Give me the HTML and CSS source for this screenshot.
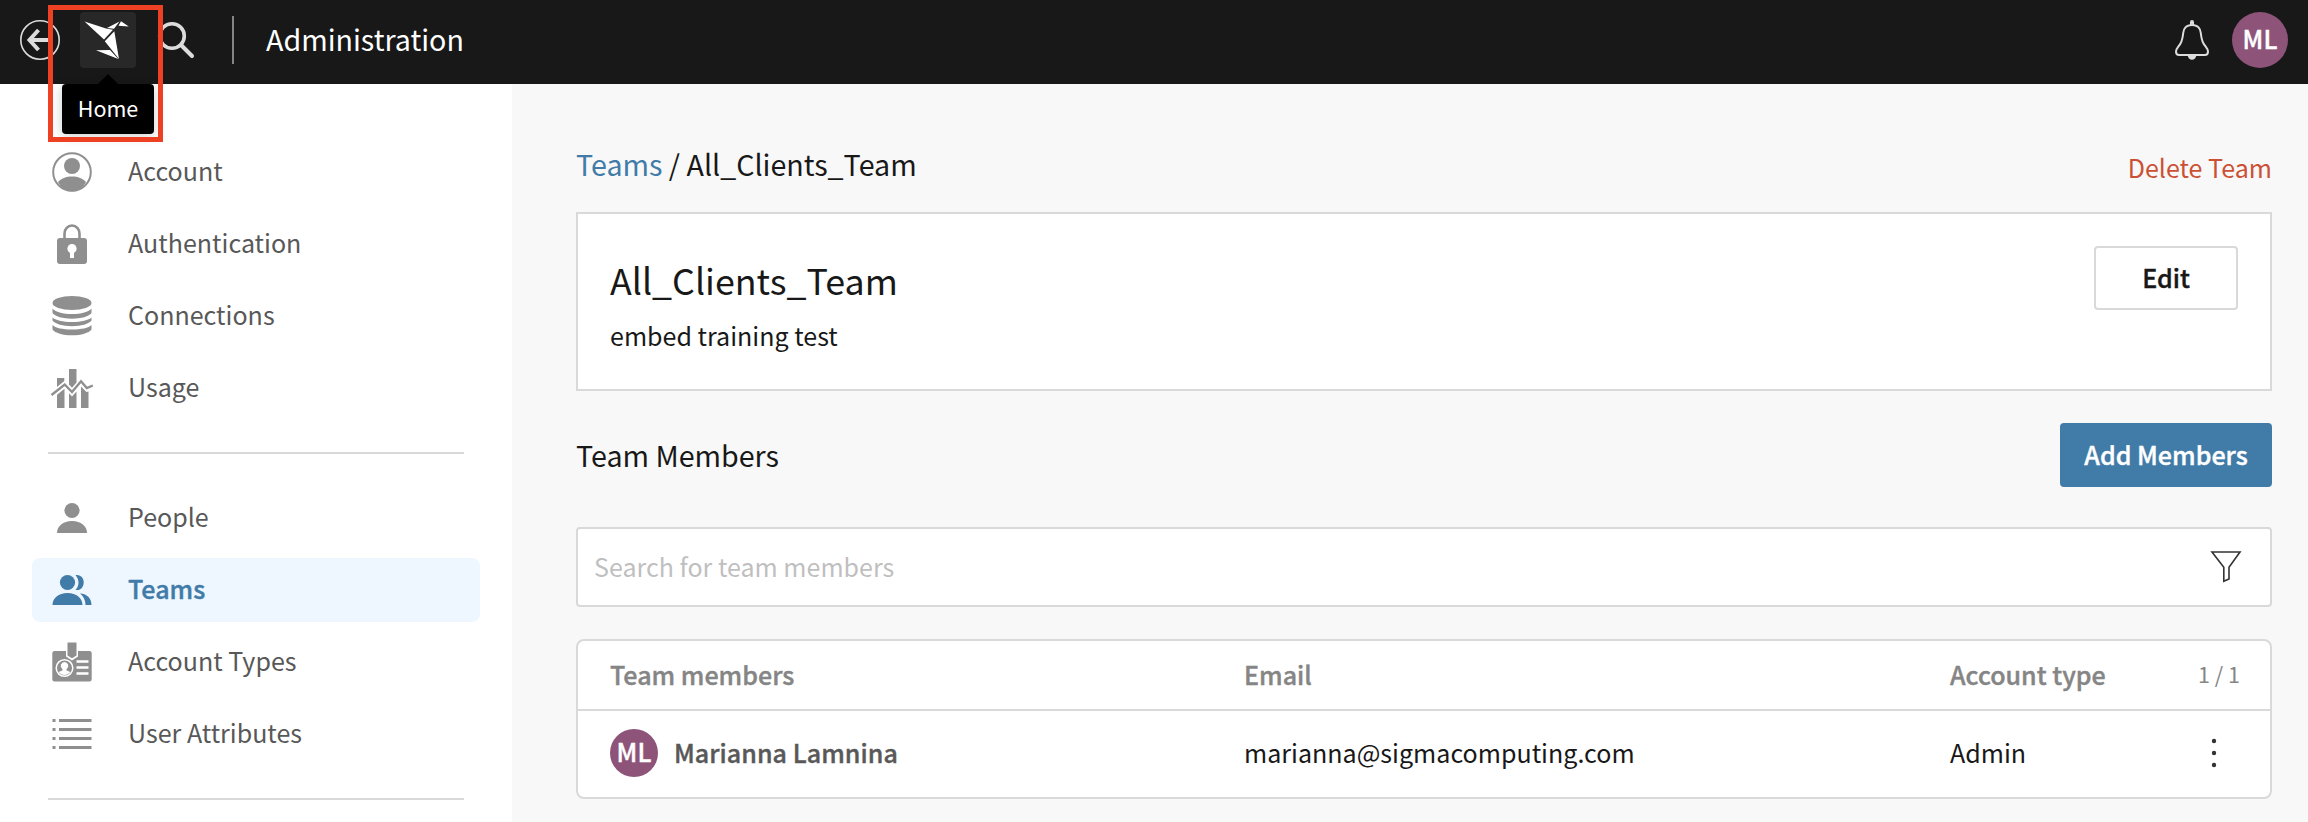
FILE: index.html
```html
<!DOCTYPE html>
<html lang="en">
<head>
<meta charset="utf-8">
<title>Administration</title>
<link rel="stylesheet" href="styles.css">
</head>
<body>
<header class="topbar">
  <svg class="back" viewBox="0 0 40 40"><circle cx="20" cy="20" r="19.2" fill="none" stroke="#dcdcdc" stroke-width="1.6"/><path d="M29 20H10M18.5 10 9.5 20l9 10" fill="none" stroke="#dcdcdc" stroke-width="4"/></svg>
  <div class="home">
    <svg viewBox="0 0 56 56" fill="#fff"><path d="M4.500 9.500 26 16.600 33 17.800 24 27.500ZM27 16 39.500 9.500 34 16.800ZM41 9.300 48.800 14.500 38.500 13.800ZM34.300 19.300 39 47 24.800 29.300ZM16 38.200 30 38 38.300 47Z"/></svg>
    <div class="tooltip">Home</div>
    <div class="marker"></div>
  </div>
  <svg class="search" viewBox="0 0 40 40"><circle cx="16" cy="16" r="12.3" fill="none" stroke="#dcdcdc" stroke-width="3.6"/><path d="m25 25 11 11" stroke="#dcdcdc" stroke-width="4" stroke-linecap="round"/></svg>
  <div class="bar"></div>
  <h1 class="apptitle">Administration</h1>
  <svg class="bell" viewBox="0 0 34 40"><path d="M17 5c-6 0-8.500 4-8.800 8-.5 5-.7 7-2.700 10.500C3.500 27 1 28.500 1 31.500 1 33.500 2.200 35 4.200 35h25.600c2 0 3.200-1.500 3.200-3.500 0-3-2.500-4.500-4.500-8-2-3.500-2.200-5.500-2.700-10.500C25.500 9 23 5 17 5Z" fill="none" stroke="#dcdcdc" stroke-width="2"/><path d="M15 5V2a2 2 0 0 1 4 0v3ZM12.800 35.500h8.400a4.200 4.200 0 0 1-8.400 0Z" fill="#dcdcdc"/></svg>
  <div class="avatar big"><span>ML</span></div>
</header>
<div class="layout">
  <nav class="side">
    <a class="item"><svg viewBox="0 0 40 40"><circle cx="20" cy="20" r="18.800" fill="none" stroke="currentColor" stroke-width="2"/><circle cx="20" cy="14" r="8"/><path d="M6 30c3-3.500 8-5.500 14-5.500S31 26.500 34 30C31 36 26 39.300 20 39.300S9 36 6 30Z"/></svg><span>Account</span></a>
    <a class="item"><svg viewBox="0 0 40 40"><path d="M12.500 15V9.500a7.500 8 0 0 1 15 0V15" fill="none" stroke="currentColor" stroke-width="2.600"/><path fill-rule="evenodd" d="M8 14h24a3 3 0 0 1 3 3v20a3 3 0 0 1-3 3H8a3 3 0 0 1-3-3V17a3 3 0 0 1 3-3ZM20 20a4.700 4.700 0 0 0-2 8.900V34h4v-5.100A4.700 4.700 0 0 0 20 20Z"/></svg><span>Authentication</span></a>
    <a class="item"><svg viewBox="0 0 40 40"><ellipse cx="20" cy="7" rx="19.500" ry="7"/><path d="M.5 12.500C3 16 11 18 20 18s17-2 19.500-5.500V17C37 20.500 29 22.700 20 22.700S3 20.500.5 17ZM.5 21.500C3 24 11 26 20 26s17-2 19.500-4.500V24.500C37 28 29 30.200 20 30.200S3 28 .5 24.500ZM.5 29C3 32 11 33.500 20 33.500S37 32 39.500 29v4.500C37 37 29 39.300 20 39.300S3 37 .5 33.500Z"/></svg><span>Connections</span></a>
    <a class="item"><svg class="wide" viewBox="-2 0 44 40"><path d="m-.5 27 13.200-10.500L20 24l9-10.700 5.800 6.800 6-2.600" fill="none" stroke="currentColor" stroke-width="2.400"/><path d="M5 10h7.300v3L5 19ZM17 1h7.500v13.500L20 19.800 17 16.500ZM5 26.800l7.500-6V40H5ZM17 25.200l3 3.200 4.500-5V40H17ZM29 18.500l5.500 5.500 2-.5V40H29Z"/></svg><span>Usage</span></a>
    <hr>
    <a class="item"><svg viewBox="0 0 40 40"><circle cx="20" cy="12.500" r="7.600"/><path d="M5 35c0-7 6-12 15-12s15 5 15 12Z"/></svg><span>People</span></a>
    <a class="item active"><svg viewBox="0 0 40 40"><circle cx="15.500" cy="12.500" r="7.600"/><path d="M.5 35c0-7 6-12 15-12s15 5 15 12ZM23.500 5.200c11-1.800 11 16.600 0 14.800 4-4.500 4-10.300 0-14.800ZM28 23.500c7.500.5 11.500 5 11.500 11.500H33.500C33.500 30 31.500 26.500 28 23.500Z"/></svg><span>Teams</span></a>
    <a class="item"><svg viewBox="0 0 40 40"><path d="M2.500 9H14v5.500l6 4 6-4V9h11.500a2.200 2.200 0 0 1 2.200 2.200v26a2.200 2.200 0 0 1-2.200 2.200h-35a2.200 2.200 0 0 1-2.200-2.200v-26A2.200 2.200 0 0 1 2.500 9Z"/><path d="M15.500.5h9v13L20 16.300l-4.500-2.800Z"/><circle cx="12.500" cy="26" r="8.300" fill="none" stroke="#fff" stroke-width="1.500"/><path fill="#fff" d="M12.500 20a3.800 3.800 0 0 1 2.300 6.800l-.5 1.500 4 1.700a7 7 0 0 1-11.600 0l4-1.700-.5-1.500A3.800 3.800 0 0 1 12.500 20Z"/><path d="M24.500 19.500h12M24.500 25.500h12M24.500 31.500h12" stroke="#fff" stroke-width="2.600"/></svg><span>Account Types</span></a>
    <a class="item"><svg viewBox="0 0 40 40"><path d="M.5 6.500h3M7 6.500h32.500M.5 15.500h3M7 15.500h32.500M.5 24.500h3M7 24.500h32.500M.5 33.500h3M7 33.500h32.500" stroke="currentColor" stroke-width="3"/></svg><span>User Attributes</span></a>
    <hr>
  </nav>
  <main class="main">
    <div class="crumbs"><h2 class="h2"><a>Teams</a> / All_Clients_Team</h2><a class="delete">Delete Team</a></div>
    <section class="card">
      <div><h3 class="name">All_Clients_Team</h3><p class="desc">embed training test</p></div>
      <button class="btn edit"><span>Edit</span></button>
    </section>
    <div class="members"><h2 class="h2">Team Members</h2><button class="btn add"><span>Add Members</span></button></div>
    <div class="filter"><span>Search for team members</span><svg viewBox="0 0 32 34"><path d="M2 2h28L19 17.200v11.700l-5.200 2.300V17.200Z" fill="none" stroke="#333" stroke-width="1.600"/></svg></div>
    <section class="table">
      <div class="row head"><span>Team members</span><span>Email</span><span>Account type</span><span class="count">1 / 1</span></div>
      <div class="row"><div class="person"><div class="avatar"><span>ML</span></div><span class="strong">Marianna Lamnina</span></div><span class="cell">marianna@sigmacomputing.com</span><span class="cell">Admin</span><svg class="dots" viewBox="0 0 8 32"><circle cx="4" cy="4" r="2.200"/><circle cx="4" cy="16" r="2.200"/><circle cx="4" cy="28" r="2.200"/></svg></div>
    </section>
  </main>
</div>
</body>
</html>
```
FILE: styles.css
```css
* { box-sizing: border-box; margin: 0; }
html { height: 822px; overflow: hidden; }
body { height: 822px; overflow: hidden; background: #fff; color: #181818; font: 400 25.05px/36px "Noto Sans CJK SC", "Noto Sans", sans-serif; }
svg { display: block; flex: none; }
.topbar { height: 84px; background: #181818; display: flex; align-items: center; padding: 0 20px; padding-bottom: 4px; }
.back { width: 40px; height: 40px; }
.home { position: relative; width: 56px; height: 56px; margin-left: 20px; background: #282828; border-radius: 4px; }
.tooltip { position: absolute; left: -18px; top: 72px; width: 92px; height: 50px; border-radius: 4px; background: #000; color: #fff; font-size: 21.5px; line-height: 48px; text-align: center; box-shadow: 0 2px 12px rgba(0, 0, 0, .2); }
.tooltip::before { content: ""; position: absolute; left: 36px; top: -10px; border: 10px solid transparent; border-top: 0; border-bottom-color: #000; }
.marker { position: absolute; z-index: 2; left: -32.5px; top: -7px; width: 115px; height: 137px; border: 5px solid #ee4023; }
.search { width: 40px; height: 40px; margin-left: 20px; }
.bar { width: 2px; height: 48px; margin: 0 32px 0 36px; background: #858585; }
.apptitle { font-weight: 400; font-size: 28.63px; color: #fff; padding-bottom: 3px; }
.bell { width: 34px; height: 40px; margin-left: auto; margin-right: 23px; }
.avatar { width: 48px; height: 48px; border-radius: 50%; background: #8d5379; color: #fff; font-weight: 500; display: flex; align-items: center; justify-content: center; flex: none; }
.avatar span { padding-bottom: 4px; -webkit-text-stroke: .4px; }
.big { width: 56px; height: 56px; }
.layout { display: flex; height: 738px; overflow: hidden; }
.side { width: 512px; padding: 56px 32px 0; display: flex; flex-direction: column; gap: 8px; flex: none; }
.item { display: flex; flex: none; align-items: center; height: 64px; padding-left: 20px; gap: 36px; border-radius: 8px; color: #585858; }
.item svg { width: 40px; height: 40px; color: #8f8f8f; fill: currentColor; }
.item svg.wide { width: 44px; margin: 0 -2px; }
.item span { padding-bottom: 4px; }
.item.active { background: #eef7ff; color: #417ba8; font-weight: 500; -webkit-text-stroke: .4px; }
.item.active svg { color: #417ba8; }
.side hr { height: 2px; border: 0; background: #d9d9d9; margin: 24px 16px; flex: none; }
.side hr:last-child { margin-bottom: 0; }
.main { flex: 1; background: #f8f8f8; padding: 60px 36px 0 64px; }
.crumbs { display: flex; justify-content: space-between; height: 68px; }
.h2 { font-weight: 400; font-size: 28.63px; line-height: 40px; }
.crumbs a { color: #417ba8; }
.crumbs .delete { color: #cb5134; line-height: 46px; }
.card { height: 179px; background: #fff; border: 2px solid #d9d9d9; padding: 32px; display: flex; justify-content: space-between; align-items: flex-start; }
.name { font-weight: 400; font-size: 35.8px; line-height: 67px; }
.desc { line-height: 45px; }
.btn { height: 64px; border: 2px solid #d9d9d9; border-radius: 4px; background: #fff; color: #181818; font: 500 25.05px/36px "Noto Sans CJK SC", "Noto Sans", sans-serif; -webkit-text-stroke: .4px; }
.btn span { display: block; padding-bottom: 3px; }
.edit { width: 144px; }
.add { width: 212px; background: #417ba8; border-color: #417ba8; color: #fff; padding: 0; }
.members { display: flex; justify-content: space-between; align-items: center; margin-top: 32px; height: 64px; }
.filter { margin-top: 40px; height: 80px; border: 2px solid #d9d9d9; border-radius: 4px; background: #fff; color: #bfbfbf; display: flex; align-items: center; justify-content: space-between; padding: 0 28px 0 16px; }
.filter svg { width: 32px; height: 34px; }
.filter span { padding-bottom: 3px; }
.table { margin-top: 32px; height: 160px; border: 2px solid #d9d9d9; border-radius: 8px; background: #fff; }
.row { display: grid; grid-template-columns: 634px 706px 248px 1fr; align-items: center; height: 84px; padding-left: 32px; }
.head { height: 70px; border-bottom: 2px solid #d9d9d9; color: #858585; font-weight: 500; }
.head span { -webkit-text-stroke: .4px; padding-bottom: 3px; }
.head .count { font-weight: 400; font-size: 21.5px; -webkit-text-stroke: 0; }
.person { display: flex; align-items: center; gap: 16px; }
.strong { font-weight: 500; color: #585858; -webkit-text-stroke: .4px; padding-bottom: 3px; letter-spacing: .04px; }
.cell { padding-bottom: 3px; }
.dots { width: 8px; height: 32px; margin-left: 12px; fill: #333; }
```
